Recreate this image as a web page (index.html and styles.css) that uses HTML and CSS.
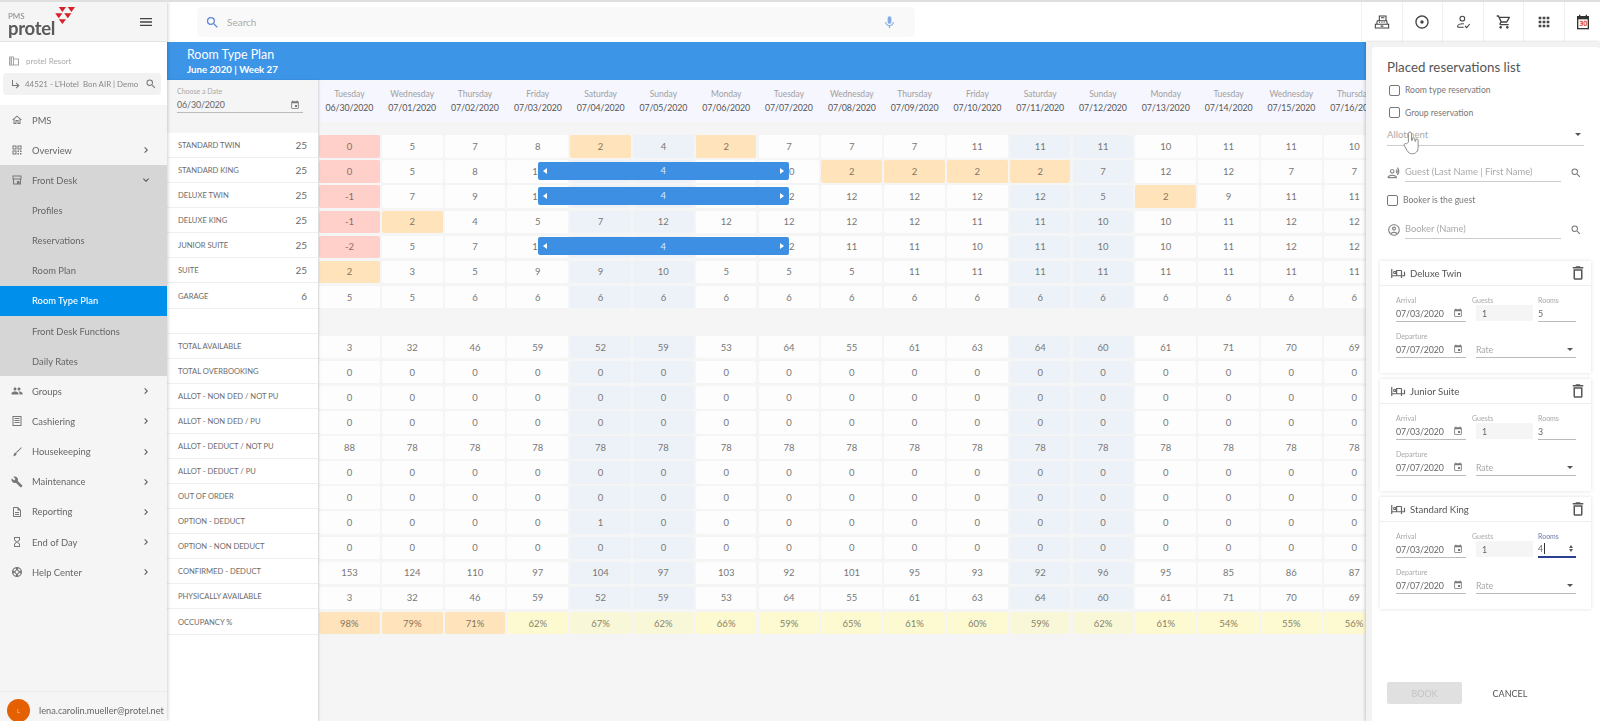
FILE: index.html
```html
<!DOCTYPE html>
<html lang="en">
<head>
<meta charset="utf-8">
<title>Room Type Plan</title>
<link rel="stylesheet" href="styles.css">
</head>
<body>
<div class="app">
  <aside class="side">
    <div class="side-head">
      <div class="logo">
        <div class="logo-text"><span class="pms">PMS</span><span class="protel">protel</span></div>
        <svg class="tris" viewBox="0 0 24 20" width="22" height="18"><path fill="#d8202a" d="M4 0h8l-4 5.500zM14 0h8l-4 5.500zM0 7h8l-4 5.500zM10 7h8l-4 5.500zM4 13.500h8l-4 5.500z"/></svg>
      </div>
      <svg class="ic18" viewBox="0 0 24 24"><path d="M3 18h18v-2H3v2zm0-5h18v-2H3v2zm0-7v2h18V6H3z"/></svg>
    </div>
    <div class="resort">
      <div class="resort-name"><svg class="ic12 light" viewBox="0 0 24 24"><path d="M12 7V3H2v18h20V7H12zM6 19H4v-2h2v2zm0-4H4v-2h2v2zm0-4H4V9h2v2zm0-4H4V5h2v2zm4 12H8V5h2v14zm10 0h-8V9h8v10z"/></svg><span>protel Resort</span></div>
      <div class="resort-box"><svg class="ic12" viewBox="0 0 24 24"><path d="M19 15l-6 6-1.420-1.420L15.170 16H4V4h2v10h9.170l-3.590-3.580L13 9l6 6z"/></svg><span>44521 - L'Hotel&nbsp; Bon AIR | Demo</span><svg class="ic12 end" viewBox="0 0 24 24"><path d="M15.500 14h-.79l-.28-.27A6.471 6.471 0 0 0 16 9.500 6.500 6.500 0 1 0 9.500 16c1.610 0 3.090-.59 4.230-1.570l.27.28v.79l5 4.990L20.490 19l-4.990-5zm-6 0C7.010 14 5 11.990 5 9.500S7.010 5 9.500 5 14 7.010 14 9.500 11.990 14 9.500 14z"/></svg></div>
    </div>
    <nav class="nav">
      <div class="item"><svg class="ic12" viewBox="0 0 24 24"><path d="M12 5.690l5 4.500V18h-2v-6H9v6H7v-7.810l5-4.500M12 3L2 12h3v8h6v-6h2v6h6v-8h3L12 3z"/></svg><span>PMS</span></div>
      <div class="item"><svg class="ic12" viewBox="0 0 24 24"><path d="M3 3h8v8H3V3zm2 2v4h4V5H5zm8-2h8v8h-8V3zm2 2v4h4V5h-4zM3 13h8v8H3v-8zm2 2v4h4v-4H5zm8-2h3v3h-3v-3zm5 0h3v3h-3v-3zm-5 5h3v3h-3v-3zm5 0h3v3h-3v-3z"/></svg><span>Overview</span><svg class="chev" viewBox="0 0 24 24"><path d="M10 6L8.590 7.410 13.170 12l-4.580 4.590L10 18l6-6z"/></svg></div>
      <div class="group">
        <div class="item"><svg class="ic12" viewBox="0 0 24 24"><path d="M3 3h18v8h-1v10H4V11H3V3zm2 2v4h14V5H5zm1 6v8h6v-5h5v5h1v-8H6z"/></svg><span>Front Desk</span><svg class="chev" viewBox="0 0 24 24"><path d="M16.590 8.590L12 13.170 7.410 8.590 6 10l6 6 6-6z"/></svg></div>
        <div class="item">Profiles</div>
        <div class="item">Reservations</div>
        <div class="item">Room Plan</div>
        <div class="item active">Room Type Plan</div>
        <div class="item">Front Desk Functions</div>
        <div class="item">Daily Rates</div>
      </div>
      <div class="item"><svg class="ic12" viewBox="0 0 24 24"><path d="M16 11c1.660 0 2.990-1.340 2.990-3S17.660 5 16 5c-1.660 0-3 1.340-3 3s1.340 3 3 3zm-8 0c1.660 0 2.990-1.340 2.990-3S9.660 5 8 5C6.340 5 5 6.340 5 8s1.340 3 3 3zm0 2c-2.330 0-7 1.170-7 3.500V19h14v-2.500c0-2.330-4.670-3.500-7-3.500zm8 0c-.29 0-.62.02-.97.05 1.160.84 1.970 1.970 1.970 3.450V19h6v-2.500c0-2.330-4.670-3.500-7-3.500z"/></svg><span>Groups</span><svg class="chev" viewBox="0 0 24 24"><path d="M10 6L8.590 7.410 13.170 12l-4.580 4.590L10 18l6-6z"/></svg></div>
      <div class="item"><svg class="ic12" viewBox="0 0 24 24"><path d="M3 2h18v20H3V2zm2 2v16h14V4H5zm2 2h10v2H7V6zm0 4h10v2H7v-2zm0 4h10v2H7v-2z"/></svg><span>Cashiering</span><svg class="chev" viewBox="0 0 24 24"><path d="M10 6L8.590 7.410 13.170 12l-4.580 4.590L10 18l6-6z"/></svg></div>
      <div class="item"><svg class="ic12" viewBox="0 0 24 24"><path d="M20.300 2.300l1.400 1.400L11.500 14l-1.500-1.500zM8.500 13.500c1.500 0 2.500 1 2.500 2.500 0 2.500-3 4.500-7 4.500 1.500-1.500 1.500-3 2-4.500.4-1.500 1.300-2.500 2.500-2.500z"/></svg><span>Housekeeping</span><svg class="chev" viewBox="0 0 24 24"><path d="M10 6L8.590 7.410 13.170 12l-4.580 4.590L10 18l6-6z"/></svg></div>
      <div class="item"><svg class="ic12" viewBox="0 0 24 24"><path d="M22.700 19l-9.100-9.100c.9-2.300.4-5-1.500-6.900-2-2-5-2.400-7.400-1.300L9 6 6 9 1.600 4.700C.4 7.100.9 10.100 2.900 12.100c1.900 1.900 4.600 2.400 6.900 1.500l9.100 9.100c.4.4 1 .4 1.400 0l2.300-2.300c.5-.4.5-1.100.1-1.400z"/></svg><span>Maintenance</span><svg class="chev" viewBox="0 0 24 24"><path d="M10 6L8.590 7.410 13.170 12l-4.580 4.590L10 18l6-6z"/></svg></div>
      <div class="item"><svg class="ic12" viewBox="0 0 24 24"><path d="M8 16h8v2H8zm0-4h8v2H8zm6-10H6c-1.100 0-2 .9-2 2v16c0 1.100.89 2 1.990 2H18c1.100 0 2-.9 2-2V8l-6-6zm4 18H6V4h7v5h5v11z"/></svg><span>Reporting</span><svg class="chev" viewBox="0 0 24 24"><path d="M10 6L8.590 7.410 13.170 12l-4.580 4.590L10 18l6-6z"/></svg></div>
      <div class="item"><svg class="ic12" viewBox="0 0 24 24"><path d="M6 2v6h.01L6 8.010 10 12l-4 4 .01.01H6V22h12v-5.990h-.01L18 16l-4-4 4-3.990-.01-.01H18V2H6zm10 14.500V20H8v-3.500l4-4 4 4zm-4-5l-4-4V4h8v3.500l-4 4z"/></svg><span>End of Day</span><svg class="chev" viewBox="0 0 24 24"><path d="M10 6L8.590 7.410 13.170 12l-4.580 4.590L10 18l6-6z"/></svg></div>
      <div class="item"><svg class="ic12" viewBox="0 0 24 24"><path d="M12 2C6.480 2 2 6.480 2 12s4.480 10 10 10 10-4.480 10-10S17.520 2 12 2zm7.460 7.120l-2.780 1.150c-.51-1.360-1.580-2.440-2.950-2.940l1.150-2.780c2.100.8 3.770 2.470 4.580 4.570zM12 15c-1.660 0-3-1.340-3-3s1.340-3 3-3 3 1.340 3 3-1.340 3-3 3zM9.130 4.540l1.170 2.780c-1.380.5-2.470 1.590-2.980 2.970L4.540 9.130c.81-2.110 2.480-3.780 4.590-4.590zM4.540 14.870l2.780-1.150c.51 1.380 1.590 2.460 2.970 2.960l-1.170 2.780c-2.100-.81-3.770-2.480-4.580-4.590zm10.340 4.590l-1.150-2.780c1.370-.51 2.450-1.590 2.950-2.970l2.780 1.170c-.81 2.100-2.480 3.770-4.580 4.580z"/></svg><span>Help Center</span><svg class="chev" viewBox="0 0 24 24"><path d="M10 6L8.590 7.410 13.170 12l-4.580 4.590L10 18l6-6z"/></svg></div>
    </nav>
    <div class="user"><span class="avatar">L</span><span class="email">lena.carolin.mueller@protel.net</span></div>
  </aside>

  <div class="main">
    <header class="top">
      <div class="search">
        <svg class="ic15 blue" viewBox="0 0 24 24"><path d="M15.500 14h-.79l-.28-.27A6.471 6.471 0 0 0 16 9.500 6.500 6.500 0 1 0 9.500 16c1.610 0 3.090-.59 4.230-1.570l.27.28v.79l5 4.990L20.490 19l-4.990-5zm-6 0C7.010 14 5 11.990 5 9.500S7.010 5 9.500 5 14 7.010 14 9.500 11.990 14 9.500 14z"/></svg>
        <span>Search</span>
        <svg class="ic15 mic" viewBox="0 0 24 24"><path d="M12 14c1.660 0 3-1.340 3-3V5c0-1.660-1.340-3-3-3S9 3.340 9 5v6c0 1.660 1.340 3 3 3zm5.300-3c0 3-2.540 5.100-5.300 5.100S6.700 14 6.700 11H5c0 3.410 2.720 6.230 6 6.720V21h2v-3.280c3.280-.48 6-3.300 6-6.720h-1.700z"/></svg>
      </div>
      <div class="tools">
        <div class="tool"><svg class="ic18" viewBox="0 0 24 24"><path class="ln" d="M2 15.500h20V21H2zM4 15.500l1-5.500h14l1 5.500M8 10V3h10v7M10.500 5.500h5M7.500 12.500h1.500M11 12.500h1.500M14.500 12.500h1.500M10 18.200h4"/></svg></div>
        <div class="tool"><svg class="ic18" viewBox="0 0 24 24"><path d="M12 9.500c-1.380 0-2.500 1.120-2.500 2.500s1.120 2.500 2.500 2.500 2.500-1.120 2.500-2.500-1.120-2.500-2.500-2.500zM12 2C6.480 2 2 6.480 2 12s4.480 10 10 10 10-4.480 10-10S17.520 2 12 2zm0 18c-4.420 0-8-3.580-8-8s3.580-8 8-8 8 3.580 8 8-3.580 8-8 8z"/></svg></div>
        <div class="tool"><svg class="ic18" viewBox="0 0 24 24"><path class="ln" d="M11 10.500a3.500 3.500 0 1 0 0-7 3.500 3.500 0 0 0 0 7zM4 20v-1.500c0-2.500 4-4 7-4 .8 0 1.500.1 2.200.3M4 20h9M15 18l2.500 2.500L22 15"/></svg></div>
        <div class="tool"><svg class="ic18" viewBox="0 0 24 24"><path d="M15.550 13c.75 0 1.410-.41 1.750-1.030l3.580-6.490c.37-.66-.11-1.480-.87-1.480H5.210l-.94-2H1v2h2l3.600 7.590-1.350 2.440C4.520 15.370 5.480 17 7 17h12v-2H7l1.100-2h7.450zM6.160 6h12.150l-2.760 5H8.530L6.160 6zM7 18c-1.100 0-1.990.9-1.990 2S5.900 22 7 22s2-.9 2-2-.9-2-2-2zm10 0c-1.100 0-1.990.9-1.990 2s.89 2 1.990 2 2-.9 2-2-.9-2-2-2z"/></svg></div>
        <div class="tool"><svg class="ic18" viewBox="0 0 24 24"><path d="M4 8h4V4H4v4zm6 12h4v-4h-4v4zm-6 0h4v-4H4v4zm0-6h4v-4H4v4zm6 0h4v-4h-4v4zm6-10v4h4V4h-4zm-6 4h4V4h-4v4zm6 6h4v-4h-4v4zm0 6h4v-4h-4v4z"/></svg></div>
        <div class="tool cal"><svg class="ic18" viewBox="0 0 24 24"><path fill="#333" d="M3 3h18v20H3z"/><path fill="#fff" d="M5 8h14v13H5z"/><path fill="#333" d="M6 1h2v4H6zM16 1h2v4h-2z"/><path class="cal-num" d="M7 11h4v3H8.500 11v3H7M13.500 11H17v6h-3.500z"/></svg></div>
      </div>
    </header>

    <div class="body">
      <section class="plan">
        <div class="band">
          <h1>Room Type Plan</h1>
          <p>June 2020 | Week 27</p>
        </div>
        <div class="plan-body">
          <div class="labels">
            <div class="date-block">
              <div class="tiny">Choose a Date</div>
              <div class="date-input"><span>06/30/2020</span><svg class="ic9" viewBox="0 0 24 24"><path d="M17 12h-5v5h5v-5zM16 1v2H8V1H6v2H5c-1.110 0-1.990.9-1.990 2L3 19c0 1.100.89 2 2 2h14c1.100 0 2-.9 2-2V5c0-1.100-.9-2-2-2h-1V1h-2zm3 18H5V8h14v11z"/></svg></div>
            </div>
            <div class="lab"><span>STANDARD TWIN</span><b>25</b></div>
            <div class="lab"><span>STANDARD KING</span><b>25</b></div>
            <div class="lab"><span>DELUXE TWIN</span><b>25</b></div>
            <div class="lab"><span>DELUXE KING</span><b>25</b></div>
            <div class="lab"><span>JUNIOR SUITE</span><b>25</b></div>
            <div class="lab"><span>SUITE</span><b>25</b></div>
            <div class="lab"><span>GARAGE</span><b>6</b></div>
            <div class="lab"></div>
            <div class="lab"><span>TOTAL AVAILABLE</span></div>
            <div class="lab"><span>TOTAL OVERBOOKING</span></div>
            <div class="lab"><span>ALLOT - NON DED / NOT PU</span></div>
            <div class="lab"><span>ALLOT - NON DED / PU</span></div>
            <div class="lab"><span>ALLOT - DEDUCT / NOT PU</span></div>
            <div class="lab"><span>ALLOT - DEDUCT / PU</span></div>
            <div class="lab"><span>OUT OF ORDER</span></div>
            <div class="lab"><span>OPTION - DEDUCT</span></div>
            <div class="lab"><span>OPTION - NON DEDUCT</span></div>
            <div class="lab"><span>CONFIRMED - DEDUCT</span></div>
            <div class="lab"><span>PHYSICALLY AVAILABLE</span></div>
            <div class="lab"><span>OCCUPANCY %</span></div>
          </div>
          <div class="table">
            <div class="days">
              <div class="day"><span>Tuesday</span><b>06/30/2020</b></div>
              <div class="day"><span>Wednesday</span><b>07/01/2020</b></div>
              <div class="day"><span>Thursday</span><b>07/02/2020</b></div>
              <div class="day"><span>Friday</span><b>07/03/2020</b></div>
              <div class="day"><span>Saturday</span><b>07/04/2020</b></div>
              <div class="day"><span>Sunday</span><b>07/05/2020</b></div>
              <div class="day"><span>Monday</span><b>07/06/2020</b></div>
              <div class="day"><span>Tuesday</span><b>07/07/2020</b></div>
              <div class="day"><span>Wednesday</span><b>07/08/2020</b></div>
              <div class="day"><span>Thursday</span><b>07/09/2020</b></div>
              <div class="day"><span>Friday</span><b>07/10/2020</b></div>
              <div class="day"><span>Saturday</span><b>07/11/2020</b></div>
              <div class="day"><span>Sunday</span><b>07/12/2020</b></div>
              <div class="day"><span>Monday</span><b>07/13/2020</b></div>
              <div class="day"><span>Tuesday</span><b>07/14/2020</b></div>
              <div class="day"><span>Wednesday</span><b>07/15/2020</b></div>
              <div class="day"><span>Thursday</span><b>07/16/2020</b></div>
            </div>
            <div class="row"><i class="c r">0</i><i class="c">5</i><i class="c">7</i><i class="c">8</i><i class="c o">2</i><i class="c">4</i><i class="c o">2</i><i class="c">7</i><i class="c">7</i><i class="c">7</i><i class="c">11</i><i class="c">11</i><i class="c">11</i><i class="c">10</i><i class="c">11</i><i class="c">11</i><i class="c">10</i></div>
            <div class="row"><i class="c r">0</i><i class="c">5</i><i class="c">8</i><i class="c">12<span class="bar"><em class="tri-l"></em><span>4</span><em class="tri-r"></em></span></i><i class="c"></i><i class="c"></i><i class="c"></i><i class="c">10</i><i class="c o">2</i><i class="c o">2</i><i class="c o">2</i><i class="c o">2</i><i class="c">7</i><i class="c">12</i><i class="c">12</i><i class="c">7</i><i class="c">7</i></div>
            <div class="row"><i class="c r">-1</i><i class="c">7</i><i class="c">9</i><i class="c">12<span class="bar"><em class="tri-l"></em><span>4</span><em class="tri-r"></em></span></i><i class="c"></i><i class="c"></i><i class="c"></i><i class="c">12</i><i class="c">12</i><i class="c">12</i><i class="c">12</i><i class="c">12</i><i class="c">5</i><i class="c o">2</i><i class="c">9</i><i class="c">11</i><i class="c">11</i></div>
            <div class="row"><i class="c r">-1</i><i class="c o">2</i><i class="c">4</i><i class="c">5</i><i class="c">7</i><i class="c">12</i><i class="c">12</i><i class="c">12</i><i class="c">12</i><i class="c">12</i><i class="c">11</i><i class="c">11</i><i class="c">10</i><i class="c">10</i><i class="c">11</i><i class="c">12</i><i class="c">12</i></div>
            <div class="row"><i class="c r">-2</i><i class="c">5</i><i class="c">7</i><i class="c">12<span class="bar"><em class="tri-l"></em><span>4</span><em class="tri-r"></em></span></i><i class="c"></i><i class="c"></i><i class="c"></i><i class="c">12</i><i class="c">11</i><i class="c">11</i><i class="c">10</i><i class="c">11</i><i class="c">10</i><i class="c">10</i><i class="c">11</i><i class="c">12</i><i class="c">12</i></div>
            <div class="row"><i class="c o">2</i><i class="c">3</i><i class="c">5</i><i class="c">9</i><i class="c">9</i><i class="c">10</i><i class="c">5</i><i class="c">5</i><i class="c">5</i><i class="c">11</i><i class="c">11</i><i class="c">11</i><i class="c">11</i><i class="c">11</i><i class="c">11</i><i class="c">11</i><i class="c">11</i></div>
            <div class="row"><i class="c">5</i><i class="c">5</i><i class="c">6</i><i class="c">6</i><i class="c">6</i><i class="c">6</i><i class="c">6</i><i class="c">6</i><i class="c">6</i><i class="c">6</i><i class="c">6</i><i class="c">6</i><i class="c">6</i><i class="c">6</i><i class="c">6</i><i class="c">6</i><i class="c">6</i></div>
            <div class="row"></div>
            <div class="row"><i class="c">3</i><i class="c">32</i><i class="c">46</i><i class="c">59</i><i class="c">52</i><i class="c">59</i><i class="c">53</i><i class="c">64</i><i class="c">55</i><i class="c">61</i><i class="c">63</i><i class="c">64</i><i class="c">60</i><i class="c">61</i><i class="c">71</i><i class="c">70</i><i class="c">69</i></div>
            <div class="row"><i class="c">0</i><i class="c">0</i><i class="c">0</i><i class="c">0</i><i class="c">0</i><i class="c">0</i><i class="c">0</i><i class="c">0</i><i class="c">0</i><i class="c">0</i><i class="c">0</i><i class="c">0</i><i class="c">0</i><i class="c">0</i><i class="c">0</i><i class="c">0</i><i class="c">0</i></div>
            <div class="row"><i class="c">0</i><i class="c">0</i><i class="c">0</i><i class="c">0</i><i class="c">0</i><i class="c">0</i><i class="c">0</i><i class="c">0</i><i class="c">0</i><i class="c">0</i><i class="c">0</i><i class="c">0</i><i class="c">0</i><i class="c">0</i><i class="c">0</i><i class="c">0</i><i class="c">0</i></div>
            <div class="row"><i class="c">0</i><i class="c">0</i><i class="c">0</i><i class="c">0</i><i class="c">0</i><i class="c">0</i><i class="c">0</i><i class="c">0</i><i class="c">0</i><i class="c">0</i><i class="c">0</i><i class="c">0</i><i class="c">0</i><i class="c">0</i><i class="c">0</i><i class="c">0</i><i class="c">0</i></div>
            <div class="row"><i class="c">88</i><i class="c">78</i><i class="c">78</i><i class="c">78</i><i class="c">78</i><i class="c">78</i><i class="c">78</i><i class="c">78</i><i class="c">78</i><i class="c">78</i><i class="c">78</i><i class="c">78</i><i class="c">78</i><i class="c">78</i><i class="c">78</i><i class="c">78</i><i class="c">78</i></div>
            <div class="row"><i class="c">0</i><i class="c">0</i><i class="c">0</i><i class="c">0</i><i class="c">0</i><i class="c">0</i><i class="c">0</i><i class="c">0</i><i class="c">0</i><i class="c">0</i><i class="c">0</i><i class="c">0</i><i class="c">0</i><i class="c">0</i><i class="c">0</i><i class="c">0</i><i class="c">0</i></div>
            <div class="row"><i class="c">0</i><i class="c">0</i><i class="c">0</i><i class="c">0</i><i class="c">0</i><i class="c">0</i><i class="c">0</i><i class="c">0</i><i class="c">0</i><i class="c">0</i><i class="c">0</i><i class="c">0</i><i class="c">0</i><i class="c">0</i><i class="c">0</i><i class="c">0</i><i class="c">0</i></div>
            <div class="row"><i class="c">0</i><i class="c">0</i><i class="c">0</i><i class="c">0</i><i class="c">1</i><i class="c">0</i><i class="c">0</i><i class="c">0</i><i class="c">0</i><i class="c">0</i><i class="c">0</i><i class="c">0</i><i class="c">0</i><i class="c">0</i><i class="c">0</i><i class="c">0</i><i class="c">0</i></div>
            <div class="row"><i class="c">0</i><i class="c">0</i><i class="c">0</i><i class="c">0</i><i class="c">0</i><i class="c">0</i><i class="c">0</i><i class="c">0</i><i class="c">0</i><i class="c">0</i><i class="c">0</i><i class="c">0</i><i class="c">0</i><i class="c">0</i><i class="c">0</i><i class="c">0</i><i class="c">0</i></div>
            <div class="row"><i class="c">153</i><i class="c">124</i><i class="c">110</i><i class="c">97</i><i class="c">104</i><i class="c">97</i><i class="c">103</i><i class="c">92</i><i class="c">101</i><i class="c">95</i><i class="c">93</i><i class="c">92</i><i class="c">96</i><i class="c">95</i><i class="c">85</i><i class="c">86</i><i class="c">87</i></div>
            <div class="row"><i class="c">3</i><i class="c">32</i><i class="c">46</i><i class="c">59</i><i class="c">52</i><i class="c">59</i><i class="c">53</i><i class="c">64</i><i class="c">55</i><i class="c">61</i><i class="c">63</i><i class="c">64</i><i class="c">60</i><i class="c">61</i><i class="c">71</i><i class="c">70</i><i class="c">69</i></div>
            <div class="row occ"><i class="c o">98%</i><i class="c o">79%</i><i class="c o">71%</i><i class="c y">62%</i><i class="c y">67%</i><i class="c y">62%</i><i class="c y">66%</i><i class="c y">59%</i><i class="c y">65%</i><i class="c y">61%</i><i class="c y">60%</i><i class="c y">59%</i><i class="c y">62%</i><i class="c y">61%</i><i class="c y">54%</i><i class="c y">55%</i><i class="c y">56%</i></div>
          </div>
        </div>
      </section>

      <aside class="panel">
        <div class="sheet">
          <h2>Placed reservations list</h2>
          <label class="chk ind"><span class="box"></span>Room type reservation</label>
          <label class="chk ind"><span class="box"></span>Group reservation</label>
          <div class="allot"><span>Allotment</span><em class="caret"></em></div>
          <svg class="hand" viewBox="0 0 20 28" width="18" height="26"><path fill="#fff" stroke="#8a8a8a" stroke-width="1.100" d="M6 13V3.500a1.700 1.700 0 0 1 3.400 0V11l1 .1V9.500c0-1.800 2.800-1.800 2.800 0V12l.9.100v-1.300c0-1.700 2.700-1.700 2.700 0V19c0 4-2.500 7-6.300 7-3.200 0-4.600-1.400-6-3.700L1.500 17c-1-1.700 1-3.300 2.500-2z"/></svg>
          <div class="lookup first">
            <svg class="ic13" viewBox="0 0 24 24"><path d="M9 13c2.200 0 4-1.800 4-4s-1.800-4-4-4-4 1.800-4 4 1.800 4 4 4zm0-6c1.100 0 2 .9 2 2s-.9 2-2 2-2-.9-2-2 .9-2 2-2zm0 8c-2.700 0-8 1.300-8 4v2h16v-2c0-2.700-5.300-4-8-4zm-6 4c.2-.7 3.300-2 6-2s5.800 1.300 6 2H3zM15.100 7c.8 1.200.8 2.800 0 4l1.700 1.700c2-2 2-5 0-7.300L15.100 7zm3.300-5l-1.600 1.600c2.800 3 2.800 7.600 0 10.800l1.600 1.600c3.900-3.900 3.900-10 0-14z"/></svg>
            <span class="lookup-in">Guest (Last Name | First Name)</span>
            <svg class="ic12" viewBox="0 0 24 24"><path d="M15.500 14h-.79l-.28-.27A6.471 6.471 0 0 0 16 9.500 6.500 6.500 0 1 0 9.500 16c1.610 0 3.090-.59 4.230-1.570l.27.28v.79l5 4.990L20.490 19l-4.990-5zm-6 0C7.010 14 5 11.990 5 9.500S7.010 5 9.500 5 14 7.010 14 9.500 11.990 14 9.500 14z"/></svg>
          </div>
          <label class="chk booker"><span class="box"></span>Booker is the guest</label>
          <div class="lookup">
            <svg class="ic13" viewBox="0 0 24 24"><path d="M12 2C6.480 2 2 6.480 2 12s4.480 10 10 10 10-4.480 10-10S17.520 2 12 2zM7.350 18.500C8.660 17.560 10.260 17 12 17s3.340.56 4.650 1.500C15.340 19.440 13.740 20 12 20s-3.340-.56-4.650-1.500zm10.790-1.380C16.450 15.800 14.320 15 12 15s-4.450.8-6.140 2.120C4.700 15.730 4 13.950 4 12c0-4.420 3.580-8 8-8s8 3.580 8 8c0 1.950-.7 3.730-1.860 5.120zM12 6c-1.930 0-3.500 1.570-3.500 3.500S10.070 13 12 13s3.500-1.570 3.500-3.500S13.930 6 12 6zm0 5c-.83 0-1.500-.67-1.500-1.500S11.170 8 12 8s1.500.67 1.500 1.500S12.830 11 12 11z"/></svg>
            <span class="lookup-in">Booker (Name)</span>
            <svg class="ic12" viewBox="0 0 24 24"><path d="M15.500 14h-.79l-.28-.27A6.471 6.471 0 0 0 16 9.500 6.500 6.500 0 1 0 9.500 16c1.610 0 3.090-.59 4.230-1.570l.27.28v.79l5 4.990L20.490 19l-4.990-5zm-6 0C7.010 14 5 11.990 5 9.500S7.010 5 9.500 5 14 7.010 14 9.500 11.990 14 9.500 14z"/></svg>
          </div>

          <div class="cards">
            <div class="card">
              <div class="card-head"><svg class="bed" viewBox="0 0 20 14"><path class="ln" d="M1 1v12M1 10h13M14 13V4a1 1 0 0 0-1-1H7.500v7M18 4.500V10h-4M3.500 5.500a1.500 1.500 0 1 0 3 0 1.500 1.500 0 0 0-3 0z"/></svg><span>Deluxe Twin</span><svg class="ic15 trash" viewBox="0 0 24 24"><path d="M6 19c0 1.100.9 2 2 2h8c1.100 0 2-.9 2-2V7H6v12zM8 9h8v10H8V9zm7.500-5l-1-1h-5l-1 1H5v2h14V4h-3.500z"/></svg></div>
              <div class="card-body">
                <div class="f"><div class="tiny">Arrival</div><div class="val"><span>07/03/2020</span><svg class="ic9" viewBox="0 0 24 24"><path d="M17 12h-5v5h5v-5zM16 1v2H8V1H6v2H5c-1.110 0-1.990.9-1.990 2L3 19c0 1.100.89 2 2 2h14c1.100 0 2-.9 2-2V5c0-1.100-.9-2-2-2h-1V1h-2zm3 18H5V8h14v11z"/></svg></div></div>
                <div class="f"><div class="tiny shift">Guests</div><div class="val ro">1</div></div>
                <div class="f"><div class="tiny">Rooms</div><div class="val">5</div></div>
                <div class="f"><div class="tiny">Departure</div><div class="val"><span>07/07/2020</span><svg class="ic9" viewBox="0 0 24 24"><path d="M17 12h-5v5h5v-5zM16 1v2H8V1H6v2H5c-1.110 0-1.990.9-1.990 2L3 19c0 1.100.89 2 2 2h14c1.100 0 2-.9 2-2V5c0-1.100-.9-2-2-2h-1V1h-2zm3 18H5V8h14v11z"/></svg></div></div>
                <div class="f wide"><div class="tiny">&nbsp;</div><div class="val rate"><span>Rate</span><em class="caret"></em></div></div>
              </div>
            </div>
            <div class="card">
              <div class="card-head"><svg class="bed" viewBox="0 0 20 14"><path class="ln" d="M1 1v12M1 10h13M14 13V4a1 1 0 0 0-1-1H7.500v7M18 4.500V10h-4M3.500 5.500a1.500 1.500 0 1 0 3 0 1.500 1.500 0 0 0-3 0z"/></svg><span>Junior Suite</span><svg class="ic15 trash" viewBox="0 0 24 24"><path d="M6 19c0 1.100.9 2 2 2h8c1.100 0 2-.9 2-2V7H6v12zM8 9h8v10H8V9zm7.500-5l-1-1h-5l-1 1H5v2h14V4h-3.500z"/></svg></div>
              <div class="card-body">
                <div class="f"><div class="tiny">Arrival</div><div class="val"><span>07/03/2020</span><svg class="ic9" viewBox="0 0 24 24"><path d="M17 12h-5v5h5v-5zM16 1v2H8V1H6v2H5c-1.110 0-1.990.9-1.990 2L3 19c0 1.100.89 2 2 2h14c1.100 0 2-.9 2-2V5c0-1.100-.9-2-2-2h-1V1h-2zm3 18H5V8h14v11z"/></svg></div></div>
                <div class="f"><div class="tiny shift">Guests</div><div class="val ro">1</div></div>
                <div class="f"><div class="tiny">Rooms</div><div class="val">3</div></div>
                <div class="f"><div class="tiny">Departure</div><div class="val"><span>07/07/2020</span><svg class="ic9" viewBox="0 0 24 24"><path d="M17 12h-5v5h5v-5zM16 1v2H8V1H6v2H5c-1.110 0-1.990.9-1.990 2L3 19c0 1.100.89 2 2 2h14c1.100 0 2-.9 2-2V5c0-1.100-.9-2-2-2h-1V1h-2zm3 18H5V8h14v11z"/></svg></div></div>
                <div class="f wide"><div class="tiny">&nbsp;</div><div class="val rate"><span>Rate</span><em class="caret"></em></div></div>
              </div>
            </div>
            <div class="card">
              <div class="card-head"><svg class="bed" viewBox="0 0 20 14"><path class="ln" d="M1 1v12M1 10h13M14 13V4a1 1 0 0 0-1-1H7.500v7M18 4.500V10h-4M3.500 5.500a1.500 1.500 0 1 0 3 0 1.500 1.500 0 0 0-3 0z"/></svg><span>Standard King</span><svg class="ic15 trash" viewBox="0 0 24 24"><path d="M6 19c0 1.100.9 2 2 2h8c1.100 0 2-.9 2-2V7H6v12zM8 9h8v10H8V9zm7.500-5l-1-1h-5l-1 1H5v2h14V4h-3.500z"/></svg></div>
              <div class="card-body">
                <div class="f"><div class="tiny">Arrival</div><div class="val"><span>07/03/2020</span><svg class="ic9" viewBox="0 0 24 24"><path d="M17 12h-5v5h5v-5zM16 1v2H8V1H6v2H5c-1.110 0-1.990.9-1.990 2L3 19c0 1.100.89 2 2 2h14c1.100 0 2-.9 2-2V5c0-1.100-.9-2-2-2h-1V1h-2zm3 18H5V8h14v11z"/></svg></div></div>
                <div class="f"><div class="tiny shift">Guests</div><div class="val ro">1</div></div>
                <div class="f"><div class="tiny focus-label">Rooms</div><div class="val focus"><span class="typed">4</span><span class="spin"><em></em><em></em></span></div></div>
                <div class="f"><div class="tiny">Departure</div><div class="val"><span>07/07/2020</span><svg class="ic9" viewBox="0 0 24 24"><path d="M17 12h-5v5h5v-5zM16 1v2H8V1H6v2H5c-1.110 0-1.990.9-1.990 2L3 19c0 1.100.89 2 2 2h14c1.100 0 2-.9 2-2V5c0-1.100-.9-2-2-2h-1V1h-2zm3 18H5V8h14v11z"/></svg></div></div>
                <div class="f wide"><div class="tiny">&nbsp;</div><div class="val rate"><span>Rate</span><em class="caret"></em></div></div>
              </div>
            </div>
          </div>

          <div class="actions">
            <button class="book" type="button">BOOK</button>
            <button class="cancel" type="button">CANCEL</button>
          </div>
        </div>
      </aside>
    </div>
  </div>
</div>
</body>
</html>
```
FILE: styles.css
```css
* { box-sizing: border-box; }
html, body { margin: 0; height: 100%; }
body {
  font-family: Lato, "Open Sans", sans-serif;
  color: #666;
  background: #fff;
  overflow: hidden;
}
svg { fill: currentColor; flex: none; display: block; }
.ln { fill: none; stroke: currentColor; stroke-width: 1.600; }
.cal-num { fill: none; stroke: #e04a3f; stroke-width: 1.500; }

.ic9 { width: 10px; height: 10px; color: #777; }
.ic12 { width: 12px; height: 12px; color: #777; }
.ic13 { width: 14px; height: 14px; color: #888; }
.ic15 { width: 15px; height: 15px; }
.ic18 { width: 16px; height: 16px; color: #444; }
.light { color: #a5a5a5; }

.app {
  display: flex;
  width: 1600px;
  height: 721px;
  border-top: 2px solid #dfdfdf;
  filter: blur(.4px);
  overflow: hidden;
}

/* sidebar */
.side {
  width: 167px;
  height: 719px;
  background: #f5f5f5;
  display: flex;
  flex-direction: column;
  flex: none;
  z-index: 3;
  box-shadow: 1px 0 3px rgba(0,0,0,.18);
  overflow: hidden;
}
.side-head {
  height: 40px;
  display: flex;
  align-items: center;
  justify-content: space-between;
  padding: 0 13px 0 7px;
  border-bottom: 1px solid #e4e4e4;
  flex: none;
}
.logo { display: flex; align-items: flex-start; align-self: flex-start; margin-top: 10px; }
.logo-text { display: flex; flex-direction: column; width: 48px; }
.pms { font-size: 8px; line-height: 8px; color: #888; padding-left: 1px; }
.protel { font-size: 18.500px; line-height: 16px; font-weight: 700; color: #5a5a5a; letter-spacing: -.3px; padding-left: 1px; }
.tris { margin-top: -5px; }
.resort {
  height: 63px;
  background: #fff;
  padding: 12px 6px 0 3px;
  flex: none;
}
.resort-name {
  display: flex;
  align-items: center;
  gap: 6px;
  font-size: 8px;
  color: #aaa;
  padding-left: 5px;
  height: 14px;
}
.resort-box {
  margin-top: 5px;
  height: 22px;
  background: #f2f2f2;
  border-radius: 4px;
  display: flex;
  align-items: center;
  gap: 3px;
  padding: 0 4px 0 7px;
  font-size: 7.900px;
  color: #888;
  white-space: nowrap;
}
.resort-box .end { margin-left: auto; }
.nav { display: flex; flex-direction: column; }
.group { background: #d6d6d6; display: flex; flex-direction: column; }
.item {
  height: 30.150px;
  display: flex;
  align-items: center;
  padding-left: 32px;
  position: relative;
  font-size: 9.400px;
  color: #666;
}
.item > .ic12 { position: absolute; left: 10.500px; top: 9px; }
.item .chev { width: 12px; height: 12px; margin-left: auto; margin-right: 15px; color: #555; }
.item.active { background: #0090ec; color: #fff; font-weight: 500; }
.user {
  margin-top: auto;
  height: 30px;
  border-top: 1px solid #ececec;
  display: flex;
  padding: 7px 0 0 7px;
  gap: 9px;
  flex: none;
}
.avatar {
  width: 23px;
  height: 23px;
  border-radius: 50%;
  background: #e56000;
  color: #f5c9a5;
  font-size: 6px;
  display: flex;
  align-items: center;
  justify-content: center;
  flex: none;
}
.email { font-size: 9.200px; color: #666; line-height: 24px; white-space: nowrap; }

/* top bar */
.main { width: 1433px; display: flex; flex-direction: column; }
.top {
  height: 40px;
  display: flex;
  align-items: flex-start;
  background: #fff;
  flex: none;
}
.search {
  margin: 5px 0 0 30px;
  width: 718px;
  height: 30px;
  background: #f9f9f9;
  border-radius: 5px;
  display: flex;
  align-items: center;
  gap: 7px;
  padding: 0 18px 0 8px;
  font-size: 10px;
  color: #aaa;
}
.blue { color: #5d86d6; }
.mic { color: #86ace8; margin-left: auto; }
.tools { margin-left: auto; display: flex; height: 40px; }
.tool {
  width: 40.600px;
  height: 40px;
  border-left: 1px solid #f1f1f1;
  display: flex;
  align-items: center;
  justify-content: center;
}
.tool.cal { width: 36px; }

/* plan */
.body { flex: 1; display: flex; min-height: 0; }
.plan { width: 1199px; display: flex; flex-direction: column; background: #f5f5f5; }
.band {
  height: 38px;
  background: #3d95e8;
  color: #fff;
  padding: 4px 0 0 20px;
  flex: none;
}
.band h1 { margin: 0; font-size: 12.400px; line-height: 17px; font-weight: 400; }
.band p { margin: 0; font-size: 9.700px; line-height: 12px; font-weight: 700; }
.plan-body { flex: 1; display: flex; min-height: 0; }
.labels {
  width: 151px;
  flex: none;
  background: #fff;
  box-shadow: 1px 0 2px rgba(0,0,0,.14);
  z-index: 1;
  display: flex;
  flex-direction: column;
}
.date-block {
  height: 53px;
  background: #f5f5f5;
  padding: 6px 15px 0 10px;
  flex: none;
}
.tiny { font-size: 7px; line-height: 11px; color: #a8a8a8; height: 10px; white-space: nowrap; }
.date-input {
  height: 16px;
  border-bottom: 1px solid #bbb;
  display: flex;
  align-items: center;
  justify-content: space-between;
  padding-right: 3px;
  font-size: 8.800px;
  letter-spacing: -.1px;
  color: #666;
  margin-top: 1px;
}
.lab {
  height: 25.080px;
  flex: none;
  display: flex;
  align-items: center;
  justify-content: space-between;
  padding: 0 11px 0 11px;
  border-bottom: 1px solid #efefef;
  font-size: 7.600px;
  color: #6c6c6c;
  white-space: nowrap;
}
.lab b { font-size: 10px; font-weight: 400; }
.table { flex: 1; min-width: 0; overflow: hidden; }
.days {
  display: grid;
  grid-template-columns: repeat(17, 62.800px);
  height: 41px;
  margin: 1px 0 12px;
  background: #f5f6fe;
}
.day { display: flex; flex-direction: column; align-items: center; padding-top: 7px; white-space: nowrap; }
.day span { font-size: 8.500px; line-height: 13px; color: #a0a0a0; }
.day b { font-size: 8.800px; line-height: 14px; font-weight: 400; letter-spacing: -.1px; color: #555; }
.row { display: grid; grid-template-columns: repeat(17, 62.800px); height: 25.080px; }
.c {
  position: relative;
  margin: 1.300px 1.100px;
  background: #fdfdfd;
  border-radius: 2px;
  font-style: normal;
  font-size: 9.500px;
  display: flex;
  align-items: center;
  justify-content: center;
  color: #777;
}
.c:nth-child(5), .c:nth-child(6), .c:nth-child(12), .c:nth-child(13) { background: #edf2f8; }
.c.r { background: #ffcfca; color: #8a6d68; }
.c.o { background: #ffe3bb; color: #86755c; }
.c.y { background: #fdf9d1; color: #87836a; }
.occ .c.y:nth-child(5), .occ .c.y:nth-child(6), .occ .c.y:nth-child(12), .occ .c.y:nth-child(13) { background: #f8f8d8; }
.bar {
  position: absolute;
  left: 30.200px;
  top: 1.500px;
  width: 251.400px;
  height: 18px;
  background: #3d8fe3;
  border-radius: 2px;
  z-index: 2;
  color: #dcebfb;
  display: flex;
  align-items: center;
  justify-content: space-between;
  padding: 0 5px;
}
.tri-l { border: 3.500px solid transparent; border-right: 4px solid #fff; border-left: 0; }
.tri-r { border: 3.500px solid transparent; border-left: 4px solid #fff; border-right: 0; }

/* panel */
.panel {
  width: 234px;
  background: #f2f2f2;
  padding: 5px 0 0 6px;
  box-shadow: -1px 0 3px rgba(0,0,0,.2);
  z-index: 2;
  flex: none;
  display: flex;
}
.sheet {
  position: relative;
  flex: 1;
  background: #fff;
  border-radius: 4px 4px 0 0;
  display: flex;
  flex-direction: column;
  padding-bottom: 17px;
}
.sheet h2 {
  margin: 12px 0 4px 15px;
  font-size: 13.300px;
  line-height: 16px;
  font-weight: 400;
  color: #555;
}
.chk {
  display: flex;
  align-items: center;
  gap: 5px;
  font-size: 8.600px;
  color: #777;
  margin-left: 15px;
}
.chk.ind { height: 22.500px; margin-left: 17px; }
.chk.booker { height: 18px; margin-top: 9px; }
.box { width: 11px; height: 11px; border: 1px solid #777; border-radius: 2px; flex: none; }
.allot {
  height: 22px;
  margin: 0 16px 0 15px;
  border-bottom: 1px solid #ccc;
  display: flex;
  align-items: center;
  justify-content: space-between;
  padding-right: 3px;
  font-size: 9.500px;
  color: #aaa;
}
.caret { border: 3px solid transparent; border-top: 3.500px solid #555; border-bottom: 0; display: block; }
.hand { position: absolute; left: 31px; top: 83px; }
.lookup {
  height: 18px;
  margin: 12px 18px 0 15px;
  display: flex;
  align-items: center;
  gap: 4px;
}
.lookup.first { margin-top: 18px; }
.lookup-in {
  flex: 1;
  height: 18px;
  line-height: 16px;
  border-bottom: 1px solid #ccc;
  font-size: 9.400px;
  color: #aaa;
  margin-right: 5px;
}
.cards { margin: 22px 9px 0 8px; display: flex; flex-direction: column; gap: 6px; }
.card { height: 112px; box-shadow: 0 0 4px rgba(0,0,0,.13); }
.card-head {
  height: 25px;
  display: flex;
  align-items: center;
  padding: 0 4px 0 11px;
  gap: 4px;
  border-bottom: 1px solid #eee;
  font-size: 9.600px;
  color: #555;
}
.card-head .trash { margin-left: auto; color: #555; width: 18px; height: 18px; }
.bed { width: 15px; height: 11px; color: #666; }
.card-body {
  display: grid;
  grid-template-columns: 70px 52px 38px;
  column-gap: 10px;
  row-gap: 9px;
  padding: 9px 0 0 16px;
}
.f:nth-child(2) { margin-right: -5px; }
.f { min-width: 0; }
.f.wide { grid-column: 2 / span 2; }
.shift { margin-left: -4px; }
.val {
  height: 17px;
  border-bottom: 1px solid #bbb;
  display: flex;
  align-items: center;
  justify-content: space-between;
  padding-right: 3px;
  font-size: 8.800px;
  letter-spacing: -.1px;
  color: #666;
  white-space: nowrap;
}
.val.ro { background: #f5f5f5; border: 0; height: 16px; padding-left: 6px; }
.val.rate { color: #aaa; }
.focus-label { color: #6a7aa8; }
.val.focus { border-bottom: 2px solid #2a3f8f; }
.typed { border-right: 1px solid #333; padding-right: 1px; }
.spin { display: flex; flex-direction: column; gap: 1px; }
.spin em { display: block; border: 2.500px solid transparent; }
.spin em:first-child { border-bottom: 3px solid #555; border-top: 0; }
.spin em:last-child { border-top: 3px solid #555; border-bottom: 0; }
.actions { margin-top: auto; display: flex; align-items: center; padding-left: 15px; }
.actions button { font: inherit; font-size: 9px; border: 0; height: 22px; border-radius: 2px; }
.book { width: 75px; background: #e0e0e0; color: #c4c4c4; }
.cancel { width: 70px; margin-left: 13px; background: none; color: #555; }
```
